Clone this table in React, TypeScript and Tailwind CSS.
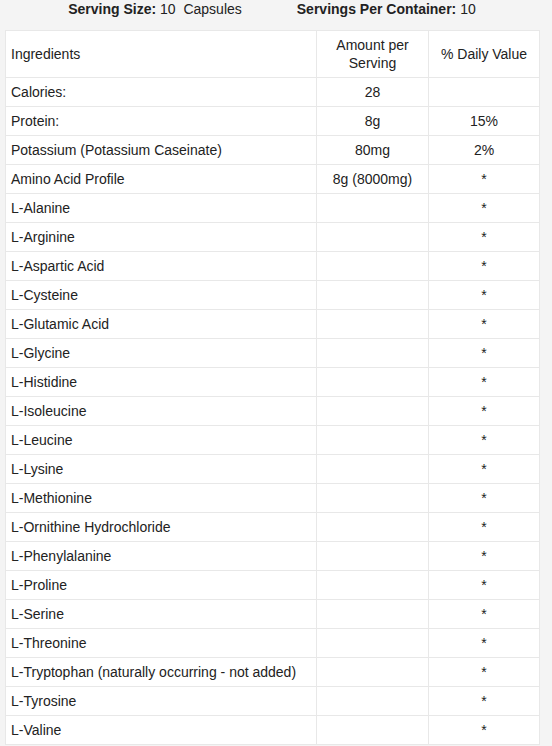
import React from "react";

const rows: [string, string, string][] = [
  ["Calories:", "28", ""],
  ["Protein:", "8g", "15%"],
  ["Potassium (Potassium Caseinate)", "80mg", "2%"],
  ["Amino Acid Profile", "8g (8000mg)", "*"],
  ["L-Alanine", "", "*"],
  ["L-Arginine", "", "*"],
  ["L-Aspartic Acid", "", "*"],
  ["L-Cysteine", "", "*"],
  ["L-Glutamic Acid", "", "*"],
  ["L-Glycine", "", "*"],
  ["L-Histidine", "", "*"],
  ["L-Isoleucine", "", "*"],
  ["L-Leucine", "", "*"],
  ["L-Lysine", "", "*"],
  ["L-Methionine", "", "*"],
  ["L-Ornithine Hydrochloride", "", "*"],
  ["L-Phenylalanine", "", "*"],
  ["L-Proline", "", "*"],
  ["L-Serine", "", "*"],
  ["L-Threonine", "", "*"],
  ["L-Tryptophan (naturally occurring - not added)", "", "*"],
  ["L-Tyrosine", "", "*"],
  ["L-Valine", "", "*"],
];

export default function App() {
  return (
    <div
      className="w-[552px] h-[746px] overflow-hidden bg-[#f4f4f4] text-[14px] text-[#222]"
      style={{ fontFamily: '"Liberation Sans", Arial, sans-serif' }}
    >
      <div className="ml-[5px] w-[534px] h-[30px] flex justify-center gap-[55px] pt-[1px] leading-[17px]">
        <span>
          <b>Serving Size:</b> 10&nbsp; Capsules
        </span>
        <span>
          <b>Servings Per Container:</b> 10
        </span>
      </div>
      <table className="ml-[5px] w-[534px] border-collapse bg-white table-fixed">
        <colgroup>
          <col className="w-[311px]" />
          <col className="w-[112px]" />
          <col className="w-[111px]" />
        </colgroup>
        <thead>
          <tr className="h-[47px]">
            <td className="border border-[#e8e8e8] px-[5px] leading-[18px] align-middle">Ingredients</td>
            <td className="border border-[#e8e8e8] px-[5px] leading-[18px] text-center align-middle">
              Amount per
              <br />
              Serving
            </td>
            <td className="border border-[#e8e8e8] px-[5px] leading-[18px] text-center align-middle">% Daily Value</td>
          </tr>
        </thead>
        <tbody>
          {rows.map(([a, b, c]) => (
            <tr key={a} className="h-[29px]">
              <td className="border border-[#e8e8e8] px-[5px] leading-[18px] align-middle">{a}</td>
              <td className="border border-[#e8e8e8] px-[5px] leading-[18px] text-center align-middle">{b}</td>
              <td className="border border-[#e8e8e8] px-[5px] leading-[18px] text-center align-middle">{c}</td>
            </tr>
          ))}
        </tbody>
      </table>
    </div>
  );
}
